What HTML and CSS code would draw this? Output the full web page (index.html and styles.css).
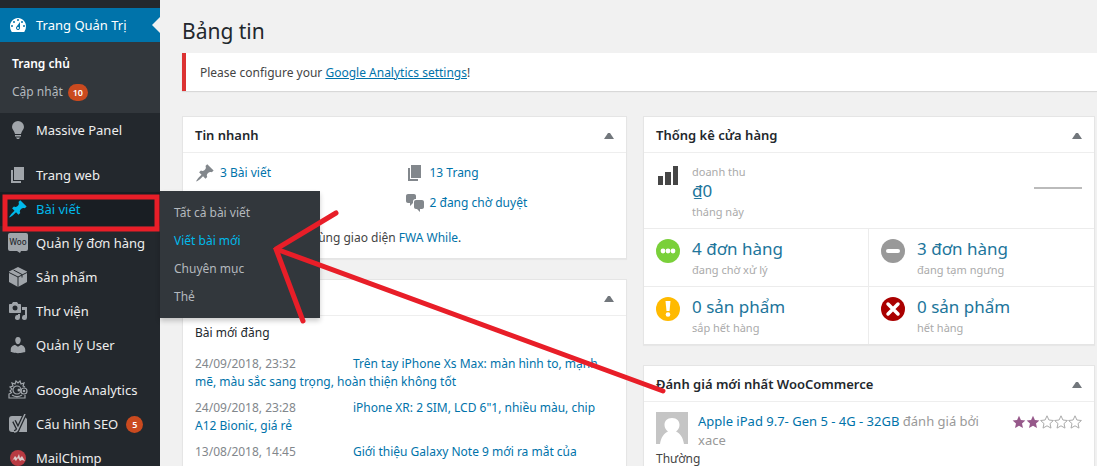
FILE: index.html
```html
<!DOCTYPE html>
<html lang="vi">
    <head>
        <meta charset="utf-8">
        <title>Bảng tin</title>
        <link rel="stylesheet" href="styles.css">
    </head>
    <body>
        <svg class="sprite" aria-hidden="true">
            <symbol id="dashboard" viewBox="0 0 20 20"><path fill-rule="evenodd" d="M3.760 17h12.480A9 9 0 0 0 18 11.300C18 6.700 14.420 3 10 3s-8 3.700-8 8.300A9 9 0 0 0 3.760 17zM10 4a1 1 0 1 1 0 2 1 1 0 0 1 0-2zM6 6a1 1 0 1 1 0 2 1 1 0 0 1 0-2zm8 0a1 1 0 1 1 0 2 1 1 0 0 1 0-2zm-5.370 5.550L12 7v6a2 2 0 1 1-3.370-1.450zM4 10a1 1 0 1 1 0 2 1 1 0 0 1 0-2zm12 0a1 1 0 1 1 0 2 1 1 0 0 1 0-2zm-6 2a1 1 0 1 0 0 2 1 1 0 0 0 0-2z"/></symbol>
            <symbol id="bulb" viewBox="0 0 20 20"><path d="M10 1a6 6 0 0 0-6 6c0 2.500 2.500 4 3 7h6c.5-3 3-4.500 3-7a6 6 0 0 0-6-6zM7 15h6v1.500H7zM8 17.500h4L11 19H9z"/></symbol>
            <symbol id="pages" viewBox="0 0 20 20"><path d="M6 15V2h10v13H6zm-1 1h8v2H3V5h2v11z"/></symbol>
            <symbol id="pin" viewBox="0 0 20 20"><path d="M10.440 3.020l1.820-1.820 6.360 6.350-1.830 1.820c-1.050-.68-2.480-.57-3.410.36l-.75.75c-.92.93-1.040 2.350-.35 3.410l-1.830 1.820-2.410-2.410-2.800 2.790c-.42.42-3.380 2.710-3.800 2.290s1.860-3.390 2.280-3.810l2.790-2.790L4.100 9.360l1.830-1.820c1.050.69 2.480.57 3.400-.36l.75-.75c.93-.92 1.050-2.350.36-3.410z"/></symbol>
            <symbol id="box" viewBox="0 0 20 20"><path d="M10 0l9 4.500v10.500L10 20l-9-5V4.500z"/><path d="M1 5.500l9 4.500 9-4.500M10 10v10M5.500 3l8.500 4.500v3" fill="none" stroke="#23282d"/></symbol>
            <symbol id="media" viewBox="0 0 20 20"><path fill-rule="evenodd" d="M13 11V4c0-.55-.45-1-1-1h-1.670L9 1H5L3.670 3H2c-.55 0-1 .45-1 1v7c0 .55.45 1 1 1h10c.55 0 1-.45 1-1zM7 4.500a2.500 2.500 0 1 1 0 5 2.500 2.500 0 0 1 0-5zM14 6h5v10.500a2.500 2.500 0 1 1-2-2.450V9h-3V6zm-4 8.050V13h2v3.500a2.500 2.500 0 1 1-2-2.450z"/></symbol>
            <symbol id="user" viewBox="0 0 20 20"><path d="M10 9.250c-2.270 0-2.730-3.440-2.730-3.440C7 4.020 7.820 2 9.970 2c2.160 0 2.980 2.020 2.710 3.810 0 0-.41 3.440-2.680 3.440zm0 2.570L12.720 10c2.390 0 4.520 2.330 4.520 4.530v2.490s-3.650 1.130-7.240 1.130c-3.650 0-7.240-1.130-7.240-1.130v-2.490c0-2.250 1.940-4.480 4.470-4.480z"/></symbol>
            <symbol id="comments" viewBox="0 0 20 20"><path d="M11 6h-.82C9.070 6 8 7.200 8 8.160V10l-3 3v-3H3c-1.100 0-2-.9-2-2V3c0-1.100.9-2 2-2h6c1.100 0 2 .9 2 2v3zm0 1h6c1.100 0 2 .9 2 2v5c0 1.100-.9 2-2 2h-2v3l-3-3h-1c-1.100 0-2-.9-2-2V9c0-1.100.9-2 2-2z"/></symbol>
            <symbol id="star" viewBox="0 0 14 14"><path d="M7 .8l1.900 4.200 4.500.5-3.400 3.100 1 4.500L7 10.800l-4 2.300 1-4.500L.6 5.500l4.500-.5z"/></symbol>
        </svg>

        <div class="page">
            <nav class="sidebar">
                <ul class="menu">
                    <li class="item current">
                        <a href="#"><svg class="icon"><use href="#dashboard"/></svg>Trang Quản Trị</a>
                    </li>
                    <li>
                        <ul class="submenu">
                            <li><a class="active" href="#">Trang chủ</a></li>
                            <li><a href="#">Cập nhật <span class="count">10</span></a></li>
                        </ul>
                    </li>
                    <li class="item"><a href="#"><svg class="icon"><use href="#bulb"/></svg>Massive Panel</a></li>
                    <li class="item separated"><a href="#"><svg class="icon"><use href="#pages"/></svg>Trang web</a></li>
                    <li class="item opened">
                        <a href="#"><svg class="icon"><use href="#pin"/></svg>Bài viết</a>
                        <ul class="submenu flyout">
                            <li><a href="#">Tất cả bài viết</a></li>
                            <li><a class="hovered" href="#">Viết bài mới</a></li>
                            <li><a href="#">Chuyên mục</a></li>
                            <li><a href="#">Thẻ</a></li>
                        </ul>
                    </li>
                    <li class="item">
                        <a href="#">
                            <svg class="icon" viewBox="0 0 20 20"><path d="M2 0h16q2 0 2 2v14q0 2-2 2h-5l-1 2-3-2H2q-2 0-2-2V2q0-2 2-2z"/><text class="woo" x="10" y="12" text-anchor="middle">Woo</text></svg>Quản lý đơn hàng
                        </a>
                    </li>
                    <li class="item"><a href="#"><svg class="icon"><use href="#box"/></svg>Sản phẩm</a></li>
                    <li class="item"><a href="#"><svg class="icon"><use href="#media"/></svg>Thư viện</a></li>
                    <li class="item"><a href="#"><svg class="icon"><use href="#user"/></svg>Quản lý User</a></li>
                    <li class="item separated">
                        <a href="#">
                            <svg class="icon" viewBox="0 0 20 20"><g fill="none" stroke="#a0a5aa" stroke-width="1.200"><path d="M4 13l-2-2 2-2-2-2 3-1-1-3 3 1 1-3 2 2 2-2 1 3 3-1-1 3 2 1M3 13l-2 1v4h16v-3M4 15c3 2 7 2 10 0"/><circle cx="9" cy="10" r="4"/><circle cx="16" cy="11" r="3"/></g><circle cx="11" cy="10" r="1.500"/><circle cx="16" cy="11" r="1.300"/></svg>Google Analytics
                        </a>
                    </li>
                    <li class="item">
                        <a href="#">
                            <svg class="icon" viewBox="0 0 20 20"><path d="M4 2h12l3 3v13H4q-3 0-3-3V5q0-3 3-3z"/><path d="M6 7l4 8M17 0l-7 15q-1 3-4 3" fill="none" stroke="#23282d" stroke-width="4"/><path d="M6 7l4 8M17 0l-7 15q-1 3-4 3" fill="none" stroke="#a0a5aa" stroke-width="1.500"/></svg>Cấu hình SEO <span class="count">5</span>
                        </a>
                    </li>
                    <li class="item">
                        <a href="#">
                            <svg class="icon" viewBox="0 0 20 20"><circle cx="10" cy="10" r="8" fill="#b83a42"/><path d="M4 13l3-5 2 2 2-4 1 4 2-2 3 5-3-1-2 1-2-3-2 3-2-2z" fill="#dcc9c9"/></svg>MailChimp
                        </a>
                    </li>
                </ul>
            </nav>

            <main class="content">
                <h1>Bảng tin</h1>
                <div class="notice">Please configure your <a href="#">Google Analytics settings</a>!</div>

                <div class="columns">
                    <div class="column">
                        <section class="postbox">
                            <header>
                                <h2>Tin nhanh</h2>
                                <button class="toggle" aria-label="Tin nhanh"></button>
                            </header>
                            <ul class="glance">
                                <li><svg class="icon"><use href="#pin"/></svg><a href="#">3 Bài viết</a></li>
                                <li><svg class="icon"><use href="#pages"/></svg><a href="#">13 Trang</a></li>
                                <li></li>
                                <li><svg class="icon"><use href="#comments"/></svg><a href="#">2 đang chờ duyệt</a></li>
                            </ul>
                            <p class="version">WordPress 4.9 đang dùng giao diện <a href="#">FWA While</a>.</p>
                        </section>

                        <section class="postbox">
                            <header>
                                <h2>Hoạt động</h2>
                                <button class="toggle" aria-label="Hoạt động"></button>
                            </header>
                            <div class="activity">
                                <h3>Bài mới đăng</h3>
                                <ul>
                                    <li><span class="date">24/09/2018, 23:32</span><a href="#">Trên tay iPhone Xs Max: màn hình to, mạnh mẽ, màu sắc sang trọng, hoàn thiện không tốt</a></li>
                                    <li><span class="date">24/09/2018, 23:28</span><a href="#">iPhone XR: 2 SIM, LCD 6"1, nhiều màu, chip A12 Bionic, giá rẻ</a></li>
                                    <li><span class="date">13/08/2018, 14:45</span><a href="#">Giới thiệu Galaxy Note 9 mới ra mắt của</a></li>
                                </ul>
                            </div>
                        </section>
                    </div>

                    <div class="column">
                        <section class="postbox">
                            <header>
                                <h2>Thống kê cửa hàng</h2>
                                <button class="toggle" aria-label="Thống kê cửa hàng"></button>
                            </header>
                            <ul class="stats">
                                <li class="sales">
                                    <svg class="stat-icon" viewBox="0 0 24 24"><path d="M2 13h5v9H2zM9 9h6v13H9zM17 3h5v19h-5z" fill="#464646"/></svg>
                                    <a href="#">doanh thu <strong>₫0</strong> tháng này</a>
                                    <span class="sparkline"></span>
                                </li>
                                <li>
                                    <svg class="stat-icon" viewBox="0 0 24 24"><circle cx="12" cy="12" r="12" fill="#7ad03a"/><g fill="#fff"><circle cx="7" cy="12" r="2.400"/><circle cx="12" cy="12" r="2.400"/><circle cx="17" cy="12" r="2.400"/></g></svg>
                                    <a href="#"><strong>4 đơn hàng</strong> đang chờ xử lý</a>
                                </li>
                                <li>
                                    <svg class="stat-icon" viewBox="0 0 24 24"><circle cx="12" cy="12" r="12" fill="#999"/><path d="M7 12h10" stroke="#fff" stroke-width="4" stroke-linecap="round"/></svg>
                                    <a href="#"><strong>3 đơn hàng</strong> đang tạm ngưng</a>
                                </li>
                                <li>
                                    <svg class="stat-icon" viewBox="0 0 24 24"><circle cx="12" cy="12" r="12" fill="#ffba00"/><path d="M9.500 4h5l-1 10h-3z" fill="#fff"/><circle cx="12" cy="17.500" r="2.300" fill="#fff"/></svg>
                                    <a href="#"><strong>0 sản phẩm</strong> sắp hết hàng</a>
                                </li>
                                <li>
                                    <svg class="stat-icon" viewBox="0 0 24 24"><circle cx="12" cy="12" r="12" fill="#a00"/><path d="M7 7l10 10M17 7L7 17" stroke="#fff" stroke-width="3.500" stroke-linecap="round"/></svg>
                                    <a href="#"><strong>0 sản phẩm</strong> hết hàng</a>
                                </li>
                            </ul>
                        </section>

                        <section class="postbox">
                            <header>
                                <h2>Đánh giá mới nhất WooCommerce</h2>
                                <button class="toggle" aria-label="Đánh giá mới nhất WooCommerce"></button>
                            </header>
                            <div class="review">
                                <svg class="avatar" viewBox="0 0 32 32"><path fill="#c5c5c5" d="M0 0h32v32H0z"/><path fill="#fff" d="M16 6c5 0 7.500 3 7.500 7 0 3-1.500 5-3.500 6.500 4 1.500 7 6 8 12.500H4c1-6.500 4-11 8-12.500C10 18 8.500 16 8.500 13c0-4 2.500-7 7.500-7z"/></svg>
                                <h4><a href="#">Apple iPad 9.7- Gen 5 - 4G - 32GB</a> đánh giá bởi xace</h4>
                                <div class="stars" role="img" aria-label="2 / 5">
                                    <svg class="full"><use href="#star"/></svg>
                                    <svg class="full"><use href="#star"/></svg>
                                    <svg><use href="#star"/></svg>
                                    <svg><use href="#star"/></svg>
                                    <svg><use href="#star"/></svg>
                                </div>
                            </div>
                            <p class="review-text">Thường</p>
                        </section>
                    </div>
                </div>
            </main>
        </div>

        <!-- hand-drawn marks over the page -->
        <svg class="marks" width="1097" height="466" aria-hidden="true">
            <path d="M5 197h152v32H5z" stroke-linejoin="miter"/>
            <path d="M663 391L276 249M336 213l-60 36 27 72"/>
        </svg>
    </body>
</html>
```
FILE: styles.css
```css
* {
    box-sizing: border-box;
}

body {
    margin: 0;
    background: #f1f1f1;
    color: #444;
    font-family: "Noto Sans", "Open Sans", sans-serif;
    font-size: 12px;
    line-height: 18px;
}

ul {
    list-style: none;
    margin: 0;
    padding: 0;
}

h1, h2, h3, h4, p {
    margin: 0;
}

a {
    color: #0073aa;
    text-decoration: none;
}

.sprite {
    display: none;
}

.icon {
    flex: none;
    width: 20px;
    height: 20px;
    fill: #a0a5aa;
}

.page {
    display: flex;
    height: 100vh;
    overflow: hidden;
}

/* Sidebar */

.sidebar {
    flex: none;
    width: 160px;
    padding-top: 8px;
    background: #23282d;
}

.item {
    position: relative;
}

.item > a {
    display: flex;
    align-items: center;
    gap: 8px;
    height: 34px;
    padding-left: 8px;
    color: #eee;
    font-size: 13px;
    white-space: nowrap;
}

.separated {
    margin-top: 11px;
}

.current > a {
    background: #0073aa;
    color: #fff;
}

.current .icon {
    fill: #fff;
}

.current::after {
    content: "";
    position: absolute;
    right: 0;
    top: 9px;
    border: 8px solid transparent;
    border-right-color: #f1f1f1;
    border-left-width: 0;
}

.opened > a {
    background: #191e23;
    color: #00b9eb;
}

.opened .icon {
    fill: #00b9eb;
}

.woo {
    fill: #23282d;
    font-size: 8px;
    font-weight: 500;
}

.submenu {
    padding: 8px 0 7px;
    background: #32373c;
}

.submenu a {
    display: flex;
    align-items: center;
    gap: 5px;
    height: 28px;
    padding-left: 12px;
    color: #b4b9be;
}

.submenu .active {
    color: #fff;
    font-weight: 600;
}

.submenu .hovered {
    color: #00b9eb;
}

.flyout {
    position: absolute;
    left: 100%;
    top: -1px;
    z-index: 2;
    width: 160px;
    box-shadow: 0 3px 5px rgba(0, 0, 0, 0.2);
}

.flyout a {
    padding-left: 14px;
}

.count {
    min-width: 17px;
    padding: 0 5px;
    border-radius: 9px;
    background: #ca4a1f;
    color: #fff;
    font-size: 9px;
    font-weight: 600;
    line-height: 17px;
    text-align: center;
}

/* Content */

.content {
    flex: 1;
    min-width: 0;
    padding: 16px 0 0 22px;
}

h1 {
    color: #23282d;
    font-size: 21px;
    font-weight: 400;
    line-height: 30px;
}

.notice {
    margin: 7px 0 25px;
    padding: 11px 14px 9px;
    border-left: 4px solid #dc3232;
    background: #fff;
    box-shadow: 0 1px 1px rgba(0, 0, 0, 0.1);
}

.notice a {
    text-decoration: underline;
}

.columns {
    display: grid;
    grid-template-columns: 445fr 452fr;
    gap: 16px;
    padding-right: 2px;
}

.column {
    display: flex;
    flex-direction: column;
    gap: 20px;
    min-width: 0;
}

.postbox {
    border: 1px solid #e5e5e5;
    background: #fff;
    box-shadow: 0 1px 1px rgba(0, 0, 0, 0.04);
}

.postbox header {
    display: flex;
    align-items: center;
    justify-content: space-between;
    height: 36px;
    padding: 0 12px;
    border-bottom: 1px solid #eee;
}

h2 {
    color: #23282d;
    font-size: 13px;
    font-weight: 600;
}

.toggle {
    width: 10px;
    padding: 3px 0 0;
    border: 0;
    background: none;
}

.toggle::before {
    content: "";
    display: block;
    border: 4px solid transparent;
    border-top-width: 0;
    border-bottom: 6px solid #72777c;
}

.glance {
    display: grid;
    grid-template-columns: 1fr 1fr;
    padding: 5px 12px 0;
}

.glance li {
    display: flex;
    align-items: center;
    gap: 5px;
    height: 30px;
}

.glance .icon {
    fill: #82878c;
}

.version {
    padding: 11px 12px;
}

.activity {
    padding: 8px 12px;
}

h3 {
    margin-bottom: 13px;
    color: #23282d;
    font-size: 12px;
    font-weight: 400;
}

.activity li {
    margin-bottom: 8px;
}

.date {
    display: inline-block;
    min-width: 158px;
    color: #82878c;
}

.stats {
    display: grid;
    grid-template-columns: 1fr 1fr;
}

.stats li {
    display: flex;
    gap: 12px;
    padding: 10px 12px 7px;
    border-bottom: 1px solid #ececec;
}

.stats li:nth-child(even) {
    border-right: 1px solid #ececec;
}

.stats li:nth-last-child(-n + 2) {
    border-bottom: 0;
}

.stats .sales {
    grid-column: 1 / -1;
    align-items: flex-start;
}

.stat-icon {
    flex: none;
    width: 24px;
    height: 24px;
}

.stats a {
    color: #aaa;
    font-size: 11px;
}

.stats strong {
    display: block;
    margin-bottom: 2px;
    color: #21759b;
    font-size: 17px;
    font-weight: 400;
    line-height: 20px;
}

.sparkline {
    width: 48px;
    height: 2px;
    margin: 24px 0 0 auto;
    background: #bbb;
}

.review {
    display: flex;
    padding: 10px 12px 0;
}

.avatar {
    flex: none;
    width: 32px;
    height: 32px;
    margin-right: 10px;
}

h4 {
    flex: 1;
    margin-right: 12px;
    color: #999;
    font-size: 13px;
    font-weight: 400;
    line-height: 19px;
}

.stars {
    display: flex;
    padding-top: 3px;
}

.stars svg {
    width: 14px;
    height: 14px;
    fill: none;
    stroke: #aaa;
}

.stars .full {
    fill: #96588a;
    stroke: none;
}

.review-text {
    padding: 0 12px 10px;
}

.marks {
    position: absolute;
    left: 0;
    top: 0;
    z-index: 3;
    fill: none;
    stroke: #e81e28;
    stroke-width: 5px;
    stroke-linecap: round;
    pointer-events: none;
}
```
